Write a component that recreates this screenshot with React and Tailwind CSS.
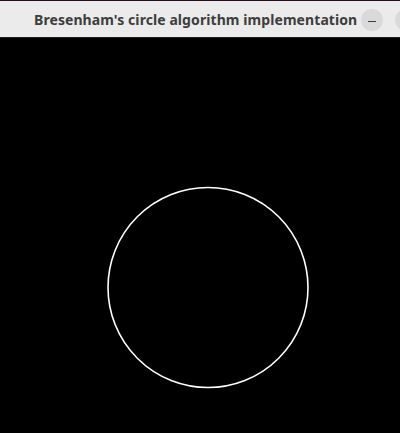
import React from "react";

const App = () => {
    return (
        <div className="w-[400px] h-[433px] bg-black overflow-hidden flex flex-col font-['Noto_Sans',sans-serif]">
            {/* Title bar */}
            <div className="h-[38px] shrink-0 bg-[#ebebeb] border-t border-[#2c0a1e] border-b border-b-[#1e1e1e] relative flex items-center">
                <span className="ml-[34px] text-[14px] font-bold text-[#3d3d3d] whitespace-nowrap tracking-[0.08px]">
                    Bresenham's circle algorithm implementation
                </span>
                <div className="absolute left-[361px] top-[8px] w-[22px] h-[22px] rounded-full bg-[#d9d9d9] flex items-center justify-center">
                    <div className="w-[8px] h-[1.5px] bg-[#3d3d3d] mt-[3px]" />
                </div>
                <div className="absolute left-[395px] top-[8px] w-[22px] h-[22px] rounded-full bg-[#d9d9d9]" />
            </div>

            {/* Canvas */}
            <div className="flex-1 relative">
                <svg width="400" height="395" className="block">
                    <circle cx="208" cy="249.5" r="100" fill="none" stroke="white" strokeWidth="1.6" />
                </svg>
            </div>
        </div>
    );
};

export default App;
